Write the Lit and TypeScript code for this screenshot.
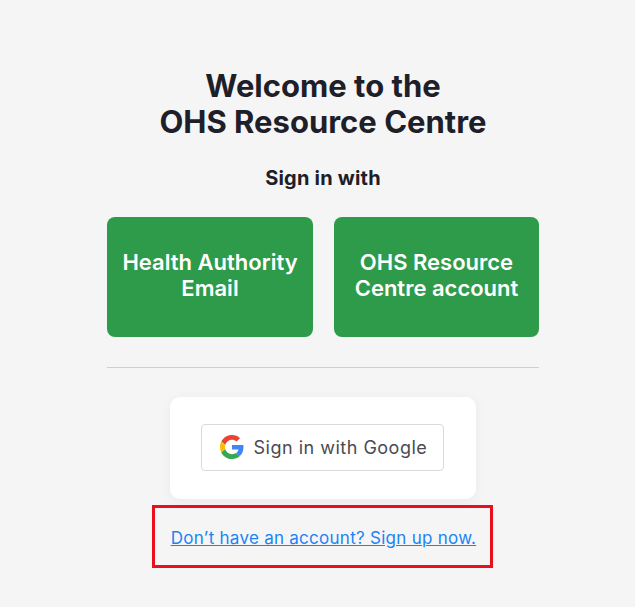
import { LitElement, html, css } from "lit";
import { customElement } from "lit/decorators.js";

@customElement("app-root")
export class AppRoot extends LitElement {
  static styles = css`
    :host {
      display: block;
      width: 635px;
      height: 607px;
      background: #f5f5f5;
      font-family: Inter, Roboto, sans-serif;
      color: #1e2029;
      overflow: hidden;
    }
    .page {
      box-sizing: border-box;
      width: 432px;
      margin-left: 107px;
      padding-top: 68px;
      display: flex;
      flex-direction: column;
      align-items: center;
    }
    h1 {
      margin: 0;
      font-size: 31px;
      line-height: 36px;
      font-weight: 700;
      text-align: center;
    }
    .sub {
      margin: 26px 0 0;
      font-size: 20px;
      line-height: 24px;
      font-weight: 700;
      letter-spacing: 0.2px;
    }
    .choices {
      margin-top: 27px;
      width: 100%;
      display: grid;
      grid-template-columns: 206px 205px;
      justify-content: space-between;
    }
    .choice {
      height: 120px;
      border-radius: 8px;
      background: #2d9b4a;
      color: #fff;
      display: flex;
      align-items: center;
      justify-content: center;
      text-align: center;
      font-size: 22px;
      line-height: 26px;
      font-weight: 600;
      padding-bottom: 4px;
      box-sizing: border-box;
    }
    .rule {
      margin-top: 30px;
      width: 100%;
      height: 1px;
      background: #cfcfcf;
    }
    .card {
      margin-top: 29px;
      box-sizing: border-box;
      width: 306px;
      height: 102px;
      background: #fff;
      border-radius: 10px;
      box-shadow: 0 2px 12px rgba(0, 0, 0, 0.05);
      display: flex;
      align-items: center;
      justify-content: center;
    }
    .google {
      box-sizing: border-box;
      width: 243px;
      height: 47px;
      margin: 0 2px 2px 0;
      border: 1px solid #d9d9de;
      border-radius: 4px;
      background: #fff;
      display: flex;
      align-items: center;
      gap: 10px;
      padding-left: 18px;
      font-size: 18px;
      font-weight: 400;
      color: #4a4a4f;
      letter-spacing: 0.5px;
    }
    .google svg {
      width: 24px;
      height: 24px;
      flex: none;
    }
    .signup {
      margin-top: 6px;
      margin-right: 2px;
      box-sizing: border-box;
      width: 341px;
      height: 63px;
      padding: 2px 0 0 3px;
      border: 3px solid #e8101c;
      display: flex;
      align-items: center;
      justify-content: center;
    }
    a {
      color: #1a84f5;
      font-size: 17px;
      letter-spacing: 0.27px;
      text-decoration: underline;
    }
  `;

  render() {
    return html`
      <div class="page">
        <h1>Welcome to the<br />OHS Resource Centre</h1>
        <p class="sub">Sign in with</p>
        <div class="choices">
          <div class="choice">Health Authority<br />Email</div>
          <div class="choice">OHS Resource<br />Centre account</div>
        </div>
        <div class="rule"></div>
        <div class="card">
          <div class="google">
            <svg viewBox="0 0 48 48">
              <path fill="#EA4335" d="M24 9.5c3.54 0 6.71 1.22 9.21 3.6l6.85-6.85C35.9 2.38 30.47 0 24 0 14.62 0 6.51 5.38 2.56 13.22l7.98 6.19C12.43 13.72 17.74 9.5 24 9.5z"/>
              <path fill="#4285F4" d="M46.98 24.55c0-1.57-.15-3.09-.38-4.55H24v9.02h12.94c-.58 2.96-2.26 5.48-4.78 7.18l7.73 6c4.51-4.18 7.09-10.36 7.09-17.65z"/>
              <path fill="#FBBC05" d="M10.53 28.59c-.48-1.45-.76-2.99-.76-4.59s.27-3.14.76-4.59l-7.98-6.19C.92 16.46 0 20.12 0 24c0 3.88.92 7.54 2.56 10.78l7.97-6.19z"/>
              <path fill="#34A853" d="M24 48c6.48 0 11.93-2.13 15.89-5.81l-7.73-6c-2.15 1.45-4.92 2.3-8.16 2.3-6.26 0-11.57-4.22-13.47-9.91l-7.98 6.19C6.51 42.62 14.62 48 24 48z"/>
            </svg>
            <span>Sign in with Google</span>
          </div>
        </div>
        <div class="signup"><a href="#">Don’t have an account? Sign up now.</a></div>
      </div>
    `;
  }
}
